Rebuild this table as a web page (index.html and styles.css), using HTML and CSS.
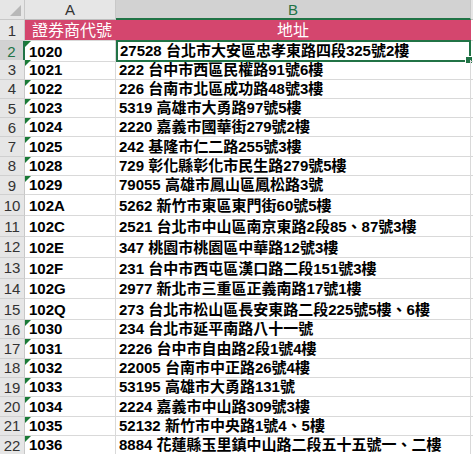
FILE: index.html
```html
<!DOCTYPE html>
<html lang="zh-Hant">
<head>
<meta charset="utf-8">
<link rel="stylesheet" href="styles.css">
</head>
<body>
<div class="sheet">
  <div class="row colhead">
    <div class="corner"><span class="corner-tri"></span></div>
    <div class="ch">A</div>
    <div class="ch sel">B</div>
    <div class="ch"></div>
  </div>
  <div class="row r1">
    <div class="rh">1</div>
    <div class="c a title">證券商代號</div>
    <div class="c b title center">地址</div>
    <div class="c x"></div>
  </div>
  <div class="row">
    <div class="rh sel">2</div>
    <div class="c a t">1020</div>
    <div class="c b active">27528 台北市大安區忠孝東路四段325號2樓<span class="handle"></span></div>
    <div class="c x"></div>
  </div>
  <div class="row"><div class="rh">3</div><div class="c a t">1021</div><div class="c b">222 台中市西區民權路91號6樓</div><div class="c x"></div></div>
  <div class="row"><div class="rh">4</div><div class="c a t">1022</div><div class="c b">226 台南市北區成功路48號3樓</div><div class="c x"></div></div>
  <div class="row"><div class="rh">5</div><div class="c a t">1023</div><div class="c b">5319 高雄市大勇路97號5樓</div><div class="c x"></div></div>
  <div class="row"><div class="rh">6</div><div class="c a t">1024</div><div class="c b">2220 嘉義市國華街279號2樓</div><div class="c x"></div></div>
  <div class="row"><div class="rh">7</div><div class="c a t">1025</div><div class="c b">242 基隆市仁二路255號3樓</div><div class="c x"></div></div>
  <div class="row"><div class="rh">8</div><div class="c a t">1028</div><div class="c b">729 彰化縣彰化市民生路279號5樓</div><div class="c x"></div></div>
  <div class="row"><div class="rh">9</div><div class="c a t">1029</div><div class="c b">79055 高雄市鳳山區鳳松路3號</div><div class="c x"></div></div>
  <div class="row tall"><div class="rh">10</div><div class="c a">102A</div><div class="c b">5262 新竹市東區東門街60號5樓</div><div class="c x"></div></div>
  <div class="row tall"><div class="rh">11</div><div class="c a">102C</div><div class="c b">2521 台北市中山區南京東路2段85、87號3樓</div><div class="c x"></div></div>
  <div class="row tall"><div class="rh">12</div><div class="c a">102E</div><div class="c b">347 桃園市桃園區中華路12號3樓</div><div class="c x"></div></div>
  <div class="row tall"><div class="rh">13</div><div class="c a">102F</div><div class="c b">231 台中市西屯區漢口路二段151號3樓</div><div class="c x"></div></div>
  <div class="row tall"><div class="rh">14</div><div class="c a">102G</div><div class="c b">2977 新北市三重區正義南路17號1樓</div><div class="c x"></div></div>
  <div class="row tall"><div class="rh">15</div><div class="c a">102Q</div><div class="c b">273 台北市松山區長安東路二段225號5樓、6樓</div><div class="c x"></div></div>
  <div class="row"><div class="rh">16</div><div class="c a t">1030</div><div class="c b">234 台北市延平南路八十一號</div><div class="c x"></div></div>
  <div class="row"><div class="rh">17</div><div class="c a t">1031</div><div class="c b">2226 台中市自由路2段1號4樓</div><div class="c x"></div></div>
  <div class="row"><div class="rh">18</div><div class="c a t">1032</div><div class="c b">22005 台南市中正路26號4樓</div><div class="c x"></div></div>
  <div class="row"><div class="rh">19</div><div class="c a t">1033</div><div class="c b">53195 高雄市大勇路131號</div><div class="c x"></div></div>
  <div class="row"><div class="rh">20</div><div class="c a t">1034</div><div class="c b">2224 嘉義市中山路309號3樓</div><div class="c x"></div></div>
  <div class="row"><div class="rh">21</div><div class="c a t">1035</div><div class="c b">52132 新竹市中央路1號4、5樓</div><div class="c x"></div></div>
  <div class="row"><div class="rh">22</div><div class="c a t">1036</div><div class="c b">8884 花蓮縣玉里鎮中山路二段五十五號一、二樓</div><div class="c x"></div></div>
  <div class="row"><div class="rh"></div><div class="c a"></div><div class="c b"></div><div class="c x"></div></div>
</div>
</body>
</html>
```

FILE: styles.css
```css
html, body {
  margin: 0;
  padding: 0;
  background: #ffffff;
}
body {
  font-family: "Liberation Sans", "Noto Sans CJK TC", sans-serif;
  overflow: hidden;
}
.sheet {
  width: 473px;
  height: 454px;
  overflow: hidden;
}
.row {
  display: grid;
  grid-template-columns: 25px 91px 355px 20px;
  height: 19.3px;
}
.row.colhead { height: 20px; }
.row.r1 { height: 21px; }
.row.tall { height: 20.8px; }

.corner {
  background: #e6e6e6;
  border-right: 1px solid #c8c8c8;
  border-bottom: 1px solid #c8c8c8;
  box-sizing: border-box;
  position: relative;
}
.corner-tri {
  position: absolute;
  right: 3px;
  bottom: 3px;
  width: 0;
  height: 0;
  border-left: 11px solid transparent;
  border-bottom: 11px solid #b8b8b8;
}
.ch {
  background: #e6e6e6;
  border-right: 1px solid #c8c8c8;
  border-bottom: 1px solid #bdbdbd;
  box-sizing: border-box;
  display: flex;
  align-items: center;
  justify-content: center;
  font-size: 15px;
  color: #333;
}
.ch.sel {
  background: #d2d2d2;
  color: #217346;
  border-bottom: 2px solid #217346;
}
.rh {
  background: #e6e6e6;
  border-right: 1px solid #c8c8c8;
  border-bottom: 1px solid #d0d0d0;
  box-sizing: border-box;
  display: flex;
  align-items: center;
  justify-content: center;
  font-size: 15px;
  color: #333;
}
.rh.sel {
  background: #d2d2d2;
  color: #217346;
  border-right: 2px solid #217346;
}
.c {
  box-sizing: border-box;
  border-right: 1px solid #d9d9d9;
  border-bottom: 1px solid #d9d9d9;
  display: flex;
  align-items: flex-end;
  font-size: 15px;
  font-weight: bold;
  color: #000;
  white-space: nowrap;
  line-height: 18px;
  position: relative;
}
.c.a { padding-left: 4px; }
.c.b { padding-left: 3px; }
.c.t::before {
  content: "";
  position: absolute;
  left: 0;
  top: 0;
  width: 0;
  height: 0;
  border-top: 6px solid #1a7a36;
  border-right: 6px solid transparent;
}
.c.title {
  background: #d4466e;
  color: #ffffff;
  font-weight: normal;
  font-size: 16px;
  border-right-color: #d4466e;
  border-bottom-color: #d9d9d9;
  padding-left: 7px;
}
.c.title.center {
  justify-content: center;
  padding-left: 0;
}
.c.active {
  border: 2px solid #217346;
  margin-top: -1px;
  padding-left: 2px;
}
.handle {
  position: absolute;
  right: -4px;
  bottom: -4px;
  width: 6px;
  height: 6px;
  background: #217346;
  border: 1px solid #fff;
}
.c.x { border-right: none; }
```
